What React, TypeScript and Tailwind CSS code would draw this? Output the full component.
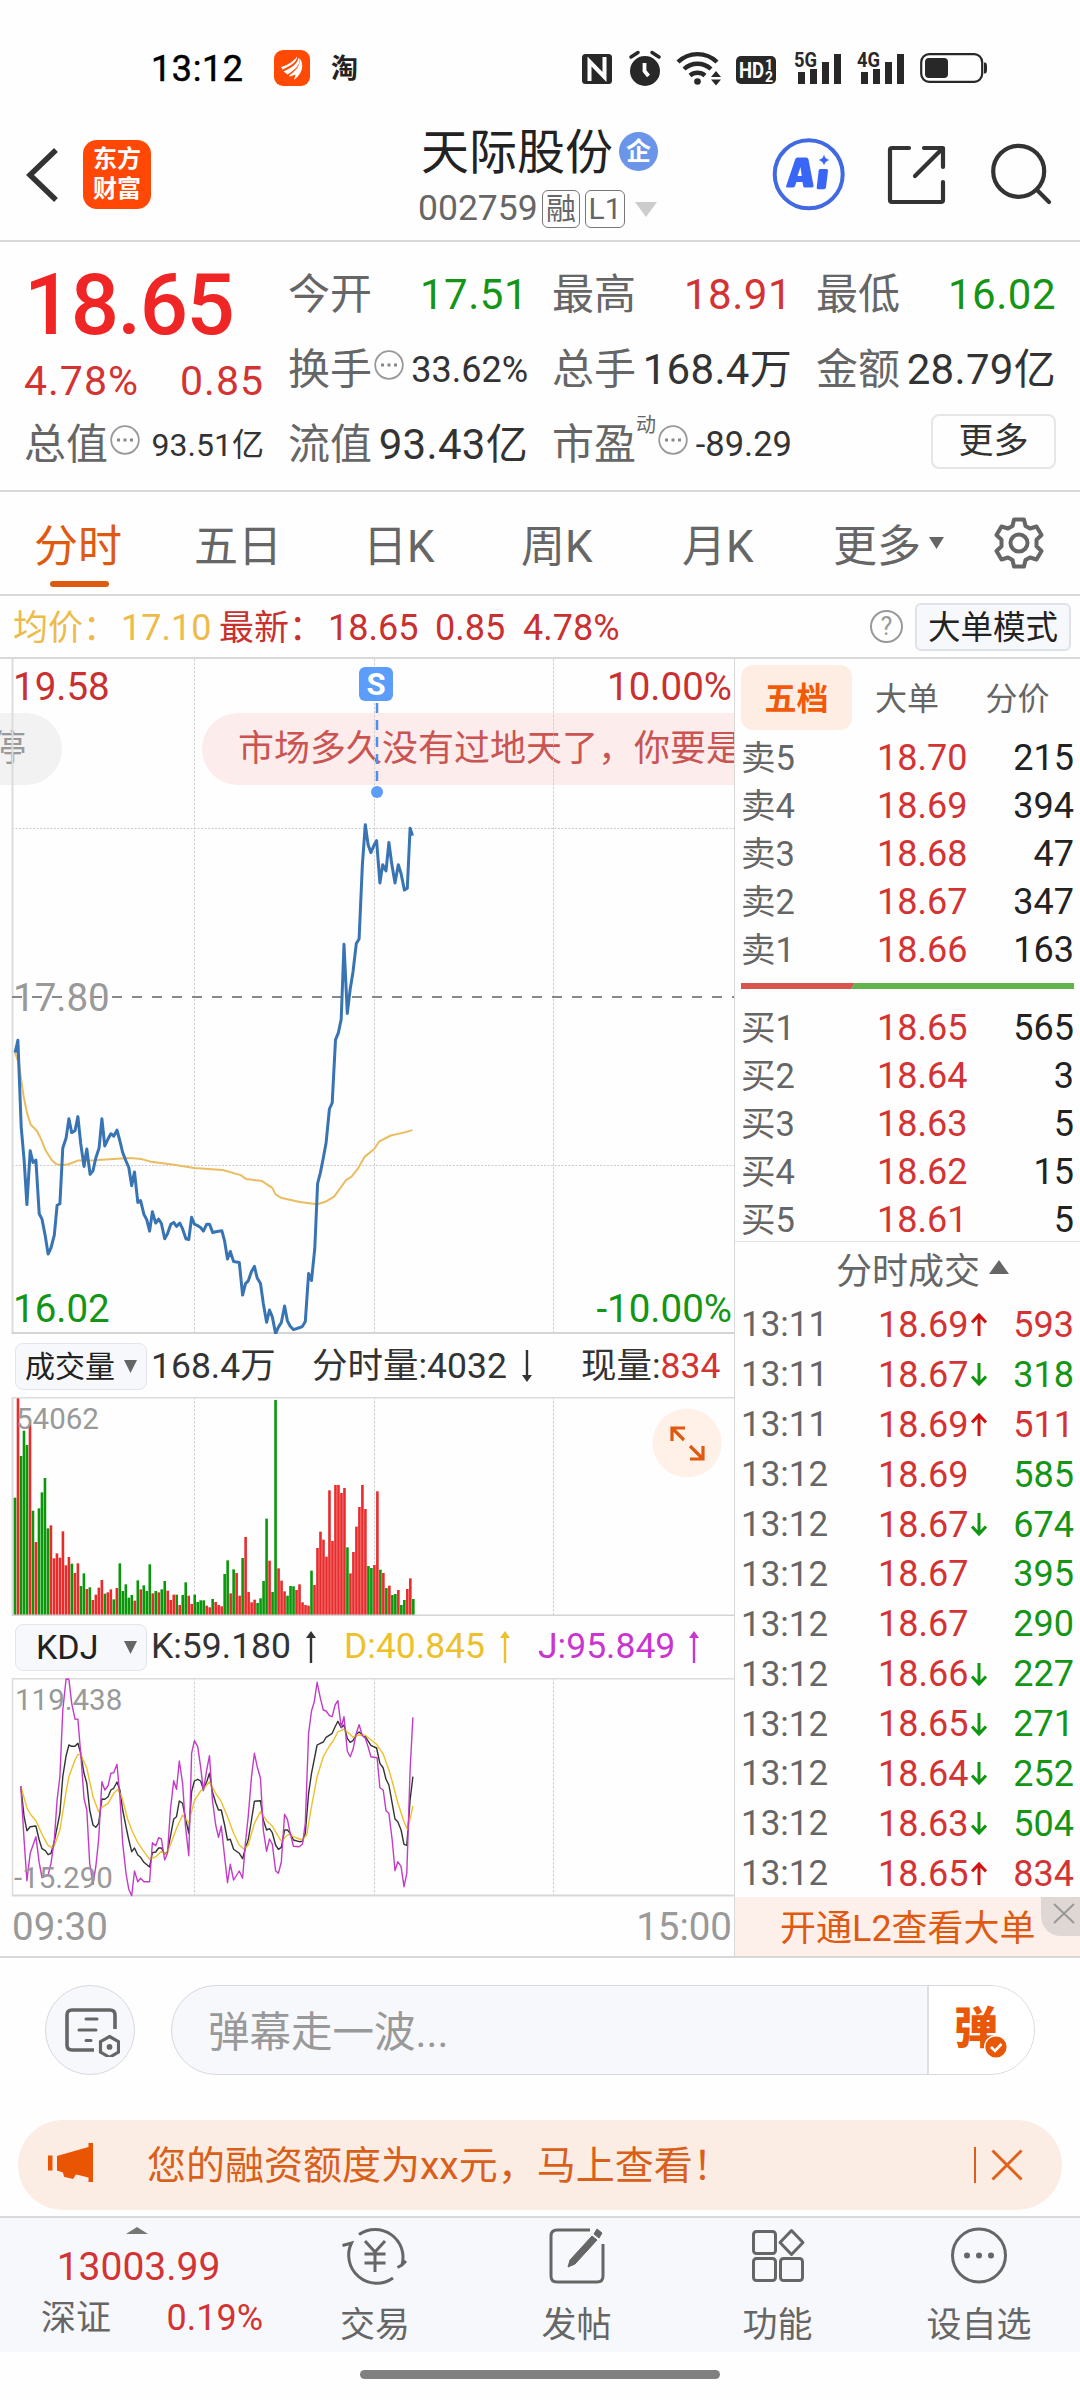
import React from "react";

type Pt = [number, number];

const parse = (s: string): Pt[] =>
  s.trim().split(/\s+/).map((p) => p.split(",").map(Number) as Pt);

const line = (s: string, sy: number) =>
  parse(s)
    .map(([x, y]) => `${(x / 2.119).toFixed(1)},${(y / sy).toFixed(1)}`)
    .join(" ");

const PRICE = line(
  `32,750 38,716 45,955 51,1045 57,1168 64,1020 70,1052 76,1046 83,1193 89,1208 96,1255 102,1304 108,1287 115,1252 121,1170 127,1166 133,1012 140,985 146,932 152,970 159,965 165,926 171,1000 178,1063 184,1015 191,1085 197,1075 203,1040 210,1012 216,932 222,1007 229,987 235,973 241,980 248,963 254,993 260,1025 267,1048 273,1066 279,1116 285,1078 292,1162 298,1157 305,1195 311,1210 317,1241 323,1188 330,1219 336,1208 342,1220 349,1262 355,1248 362,1222 368,1217 374,1228 381,1219 387,1235 394,1262 400,1264 406,1203 412,1222 419,1226 425,1231 431,1241 438,1222 444,1222 451,1245 457,1243 470,1240 476,1268 482,1318 488,1297 495,1325 507,1327 514,1417 520,1386 526,1378 533,1352 539,1338 545,1370 552,1385 558,1440 565,1492 571,1458 577,1477 584,1523 590,1505 596,1493 603,1447 609,1488 615,1503 622,1512 634,1507 641,1503 647,1490 654,1358 660,1377 667,1288 673,1110 679,1080 685,1040 691,998 698,905 704,888 711,715 717,695 723,658 729,452 736,642 742,575 748,528 755,450 761,437 768,232 774,123 780,178 786,200 793,178 798,167 805,283 811,233 818,250 824,172 830,230 837,283 844,233 850,258 857,303 863,298 869,133 874,153`,
  2.751,
);

const AVERAGE = line(
  `32,750 40,780 50,870 57,915 65,948 78,965 87,988 97,1020 110,1046 120,1057 130,1060 145,1057 165,1047 200,1046 240,1043 275,1040 300,1043 320,1050 365,1058 411,1067 472,1073 510,1087 522,1098 555,1103 565,1112 577,1122 584,1140 595,1149 635,1161 672,1167 690,1160 708,1146 720,1125 733,1101 745,1091 758,1070 773,1036 793,1015 803,995 828,978 855,970 874,963`,
  2.751,
);

const J_LINE = line(
  `44,528 51,690 57,812 64,730 76,680 83,758 89,803 102,795 108,760 115,690 121,570 127,500 133,300 140,207 146,208 152,280 159,327 165,328 171,430 178,565 184,600 190,760 197,823 203,770 209,690 216,515 222,540 229,527 235,490 241,488 248,463 254,560 260,700 267,790 273,838 279,857 285,783 292,815 298,805 305,815 317,815 323,698 330,707 336,683 342,687 349,750 355,730 361,600 368,512 374,538 380,453 387,520 393,650 400,737 406,430 412,392 419,410 425,470 431,542 438,480 444,437 450,570 457,645 463,682 469,648 476,740 482,818 488,763 495,810 507,783 514,805 520,700 526,620 533,500 539,430 545,470 552,505 558,660 565,724 571,687 577,702 584,782 590,790 596,757 603,613 609,628 615,670 622,709 634,710 641,702 647,640 654,370 660,303 666,275 672,217 679,265 685,300 691,303 698,317 704,320 710,285 716,272 723,352 729,320 736,423 742,440 748,418 755,370 761,344 768,377 774,385 780,410 786,440 799,443 805,533 812,540 818,602 824,610 831,690 837,782 843,755 850,770 856,830 862,790 869,480 875,322`,
  3,
);

const K_LINE = line(
  `44,528 51,620 57,662 64,650 76,648 83,690 89,716 96,722 102,734 108,730 115,695 127,610 133,500 140,437 146,405 152,409 159,409 165,400 171,430 178,490 184,520 190,600 197,645 203,652 209,640 216,567 222,568 229,560 235,540 241,535 248,516 254,540 260,600 267,650 273,690 279,725 285,714 292,735 298,742 305,757 317,771 323,728 330,726 336,714 342,714 349,733 355,725 361,680 368,627 374,620 380,573 387,580 393,625 400,670 406,545 412,513 419,508 425,513 431,538 438,515 444,490 450,545 457,578 463,600 469,600 476,645 482,690 488,688 495,718 507,730 514,746 520,715 526,690 533,630 539,574 552,572 558,630 565,660 571,656 577,668 584,705 590,718 596,712 603,660 609,660 615,670 622,690 634,695 641,694 647,670 654,550 660,490 672,405 679,400 685,396 691,382 704,370 710,350 716,334 723,353 729,345 736,385 742,397 748,392 755,373 761,366 768,375 774,380 786,406 798,414 805,460 812,474 818,508 824,525 831,580 837,627 843,635 850,660 856,703 862,706 869,570 875,500`,
  3,
);

const D_LINE = line(
  `44,528 57,593 64,612 76,632 89,673 102,706 110,713 115,708 127,660 140,545 146,500 159,450 165,434 171,432 184,475 197,560 209,605 216,592 229,580 241,550 250,538 258,560 270,625 279,660 292,698 305,725 317,748 330,740 342,724 352,734 361,705 374,655 387,615 400,638 406,605 412,572 425,543 431,538 444,515 457,550 469,575 482,620 495,670 507,705 517,718 526,705 539,640 552,605 565,632 577,648 590,680 597,695 605,680 612,673 622,680 634,687 641,689 650,675 660,590 672,500 685,440 698,408 706,393 716,365 723,362 729,357 736,366 748,381 761,375 774,376 786,389 798,403 812,432 824,480 831,514 843,578 856,635 864,660 870,620 875,588`,
  3,
);

// One entry per minute: tick colour (g / r) and top of the bar.
const VOLUME =
  `g503 r205 g378 g302 g345 r283 g542 r636 g535 g487 g444 g595 r586 r685 r670 r683 r604 r706 r681 g701 r729 r700 g768 g730 r777 g772 r810 r794 r773 r750 g791 r787 r778 g808 r774 g700 g783 g763 g803 g795 r812 g751 r778 g766 g783 g703 r790 g783 r787 g778 g753 r782 r810 r794 g794 r825 g795 g757 r797 r822 g794 g816 g811 g811 r827 r832 g807 r816 r825 r829 g732 g691 r790 g718 r729 r797 g684 r621 r786 r817 r809 g819 g805 g753 g566 r692 g786 g210 r715 r752 r784 g797 g768 g769 r780 r763 r817 r825 r827 g722 r765 r654 r605 r629 r680 r481 r633 r465 r465 r489 r474 g652 r730 r666 r590 r531 r465 r537 g708 g714 r705 r484 g719 r729 g774 r767 g795 g792 r780 g825 g810 r777 r745 g807`.split(
    " ",
  );

const SELLS = [
  ["卖5", "18.70", "215"],
  ["卖4", "18.69", "394"],
  ["卖3", "18.68", "47"],
  ["卖2", "18.67", "347"],
  ["卖1", "18.66", "163"],
];
const BUYS = [
  ["买1", "18.65", "565"],
  ["买2", "18.64", "3"],
  ["买3", "18.63", "5"],
  ["买4", "18.62", "15"],
  ["买5", "18.61", "5"],
];
const TRADES: [string, string, string, string, string][] = [
  ["13:11", "18.69", "up", "593", "r"],
  ["13:11", "18.67", "down", "318", "g"],
  ["13:11", "18.69", "up", "511", "r"],
  ["13:12", "18.69", "", "585", "g"],
  ["13:12", "18.67", "down", "674", "g"],
  ["13:12", "18.67", "", "395", "g"],
  ["13:12", "18.67", "", "290", "g"],
  ["13:12", "18.66", "down", "227", "g"],
  ["13:12", "18.65", "down", "271", "g"],
  ["13:12", "18.64", "down", "252", "g"],
  ["13:12", "18.63", "down", "504", "g"],
  ["13:12", "18.65", "up", "834", "r"],
];

function StatusBar() {
  return (
    <div className="flex h-[136px] items-center pl-[151px]">
      <span className="w-[123px] pt-[2px] text-[36px] tracking-[0.6px] text-black [-webkit-text-stroke:0.5px_black]">13:12</span>
      <svg className="h-9 w-9" viewBox="0 0 36 36">
        <rect width="36" height="36" rx="9" fill="#ff4a05" />
        <path d="M7 17C14 15 20 11 23 6.500c1 4-6 9.500-14.500 13Z M9.500 21.500C18 18 24 13 24.500 7.500 28 14 21 20 13.500 24.500Z M15 25.500C22 21 27 15 25.500 8 31 15 28 24 20 30l1.500-5.500-5.500 2Z" fill="#fff" />
      </svg>
      <span className="ml-[21px] w-[229px] pt-[2px] text-[27px] font-bold text-[#222]">淘</span>
      <svg className="h-[64px] w-[420px]" viewBox="560 36 420 64" overflow="visible" fill="#282828">
        <rect x="582" y="54" width="30" height="30" rx="3.500" />
        <path d="M589.500 81V61.500l15 15.500V57" fill="none" stroke="#fff" strokeWidth="4" />
        <g transform="translate(-22 0)">
          <circle cx="667" cy="71" r="15" />
          <path d="m653 57 7-4.500M681 57l-7-4.500" stroke="#282828" strokeWidth="3.500" fill="none" strokeLinecap="round" />
          <path d="M666.500 63v8l4 5" stroke="#fff" strokeWidth="3.800" fill="none" />
          <g fill="none" stroke="#282828" strokeWidth="4.400">
            <path d="M700 62a28 28 0 0 1 39 0" />
            <path d="M706 69a20 20 0 0 1 27 0" />
            <path d="M712 75.500a11.500 11.500 0 0 1 15 0" />
          </g>
          <circle cx="719.500" cy="81.500" r="3.300" />
          <path d="M733 77l5-6 5 6ZM733 79.500l5 6 5-6Z" />
          <rect x="758" y="56" width="40" height="28" rx="5" />
        </g>
        <text x="739" y="78" fill="#fff" fontSize="22.500" fontWeight="700" textLength="25" lengthAdjust="spacingAndGlyphs">HD</text>
        <text x="765" y="70" fill="#fff" fontSize="14" fontWeight="700">1</text>
        <text x="765" y="82" fill="#fff" fontSize="14" fontWeight="700">2</text>
        <text x="794" y="67" fontSize="20" fontWeight="700" textLength="23" lengthAdjust="spacingAndGlyphs">5G</text>
        <path d="M798 72h7v12h-7zM810 69h7v15h-7zM822 62h7v22h-7zM834 54h7v30h-7z" />
        <text x="857" y="67" fontSize="20" fontWeight="700" textLength="23" lengthAdjust="spacingAndGlyphs">4G</text>
        <path d="M861 72h7v12h-7zM873 69h7v15h-7zM885 62h7v22h-7zM897 54h7v30h-7z" />
        <rect x="921.200" y="54.200" width="61" height="27.600" rx="8" fill="none" stroke="#282828" strokeWidth="2.200" />
        <rect x="925" y="58" width="23" height="20" rx="4" />
        <path d="M984 62.500c2.600 0 3 1 3 5.500s-.4 5.500-3 5.500Z" />
      </svg>
    </div>
  );
}

function Header() {
  return (
    <div className="flex h-[106px] border-b-2 border-[#d8d8d8]">
      <svg className="mt-3 ml-[25px] h-[54px] w-[34px]" viewBox="0 0 34 54">
        <path d="M31 2 5 27l26 25" fill="none" stroke="#333" strokeWidth="5.500" />
      </svg>
      <div className="mt-1 ml-6 flex h-[69px] w-[68px] flex-col items-center justify-center gap-[3px] rounded-[14px] bg-[#ff4706] text-[24px] leading-[27px] font-bold text-white">
        <span>东方</span>
        <span>财富</span>
      </div>
      <div className="-mt-[6px] ml-[267px] w-[342px]">
        <div className="flex h-[46px] items-center pl-[3px]">
          <span className="w-[198px] text-[48px] whitespace-nowrap text-[#222]">天际股份</span>
          <span className="-mt-[3px] flex h-[39px] w-[39px] items-center justify-center rounded-full bg-[#6a95e8] text-[25px] font-bold text-white">企</span>
        </div>
        <div className="mt-[14px] flex h-[38px] items-center text-[35.500px] text-[#666]">
          <span className="w-[124px]">002759</span>
          <span className="flex h-[38px] w-[38px] items-center justify-center rounded-md border-[1.500px] border-[#777] text-[30px]">融</span>
          <span className="ml-[5px] flex h-[38px] w-[40px] items-center justify-center rounded-md border-[1.500px] border-[#777] text-[30px]">L1</span>
          <svg className="ml-[10px] h-[15px] w-[22px]" viewBox="0 0 22 15"><path d="M0 0h22L11 15Z" fill="#ccc" /></svg>
        </div>
      </div>
      <svg className="mt-[1px] h-[74px] w-[290px]" viewBox="760 137 290 74" overflow="visible" fill="none">
        <circle cx="808.700" cy="174.300" r="34" stroke="#4169e1" strokeWidth="4" />
        <path
          d="M797.500 157.500h8.500q2 0 2.500 2l5 26q.3 2-1.500 2h-7q-1.500 0-1.800-1.500l-.7-4h-6l-1.500 4q-.6 1.500-2.200 1.500h-5.300q-2 0-1.200-2l9-26.500q.6-1.500 2.200-1.500Z"
          fill="#3a66f8"
        />
        <path d="m800.500 167-3 9h4.200Z" fill="#fff" />
        <path d="M820 169h6.500q1.700 0 1.500 1.700l-2 16.500q-.3 2-2 2H818q-1.500 0-1.300-1.700l2-17q.2-1.500 1.300-1.500Z" fill="#3a66f8" />
        <path d="M824 154.500q1 4.500 5.500 5.500-4.500 1-5.500 5.500-1-4.500-5.500-5.500 4.500-1 5.500-5.500Z" fill="#3a66f8" />
        <g stroke="#333" strokeWidth="4.200" strokeLinecap="round" strokeLinejoin="round">
          <path d="M909 148h-17q-2 0-2 2v50q0 2 2 2h49q2 0 2-2v-18M924 148h19v19M942 149l-27 27" />
          <circle cx="1018.700" cy="171.300" r="25.500" />
          <path d="m1037 190 12 12" />
        </g>
      </svg>
    </div>
  );
}

function Dots({ className = "" }: { className?: string }) {
  return (
    <svg className={"h-[30px] w-[30px] shrink-0 -translate-y-[5px] " + className} viewBox="0 0 30 30">
      <circle cx="15" cy="15" r="13.800" fill="none" stroke="#999" strokeWidth="1.800" />
      <path d="M7 13.500h3v3H7zM13.500 13.500h3v3h-3zM20 13.500h3v3h-3z" fill="#888" />
    </svg>
  );
}

function Cell({ label, value, cls, extra }: { label: string; value: string; cls: string; extra?: React.ReactNode }) {
  return (
    <div className="flex items-center justify-between whitespace-nowrap">
      <span className="flex items-center text-[42px] text-[#666]">
        {label}
        {extra}
      </span>
      <span className={cls}>{value}</span>
    </div>
  );
}

function Quote() {
  return (
    <div className="grid h-[250px] grid-cols-4 grid-rows-[75px_75px_75px] gap-x-6 border-b-2 border-[#d8d8d8] px-6 pt-[15px]">
      <div className="flex items-center pt-[22px] text-[85px] font-medium tracking-[-1.500px] text-[#f02525]">18.65</div>
      <Cell label="今开" value="17.51" cls="text-[42px] tracking-[0.5px] text-[#159515]" />
      <Cell label="最高" value="18.91" cls="text-[42px] tracking-[0.5px] text-[#d43333]" />
      <Cell label="最低" value="16.02" cls="text-[42px] tracking-[0.5px] text-[#159515]" />
      <div className="flex items-center justify-between pt-6 text-[41px] tracking-[1px] text-[#d43333]">
        <span>4.78%</span>
        <span>0.85</span>
      </div>
      <Cell label="换手" value="33.62%" cls="text-[36px] text-[#333]" extra={<Dots className="ml-[2px]" />} />
      <Cell label="总手" value="168.4万" cls="text-[42px] tracking-[0.3px] text-[#333]" />
      <Cell label="金额" value="28.79亿" cls="text-[42px] tracking-[0.3px] text-[#333]" />
      <Cell label="总值" value="93.51亿" cls="text-[32px] text-[#333]" extra={<Dots className="ml-[2px]" />} />
      <Cell label="流值" value="93.43亿" cls="text-[42px] tracking-[0.3px] text-[#333]" />
      <Cell
        label="市盈"
        value="-89.29"
        cls="text-[34.500px] text-[#333]"
        extra={
          <>
            <span className="-mt-[40px] w-5 text-[20px]">动</span>
            <Dots className="ml-[2px]" />
          </>
        }
      />
      <div className="flex items-center justify-end">
        <span className="-mt-[6px] flex h-[55px] w-[125px] items-center justify-center rounded-lg border-2 border-[#e6e6e6] text-[35px] text-[#333]">更多</span>
      </div>
    </div>
  );
}

function Tabs() {
  return (
    <div className="flex h-[104px] items-center border-b-2 border-[#d8d8d8] pl-[34px] text-[44px] whitespace-nowrap text-[#666]">
      <div className="relative w-[88px] pt-[7px] text-[#df5a10]">
        分时
        <div className="absolute top-[63px] left-[16px] h-[6px] w-[59px] rounded-full bg-[#df5a10]" />
      </div>
      <span className="ml-[72px] w-[88px] pt-[7px]">五日</span>
      <span className="ml-[81px] w-[72px] pt-[7px]">日K</span>
      <span className="ml-[86px] w-[72px] pt-[7px]">周K</span>
      <span className="ml-[89px] w-[72px] pt-[7px]">月K</span>
      <span className="ml-[79px] w-[96px] pt-[7px]">更多</span>
      <svg className="h-3 w-[15px]" viewBox="0 0 15 12"><path d="M0 0h15L7.500 12Z" fill="#666" /></svg>
      <svg className="ml-[49px] h-[52px] w-[52px]" viewBox="0 0 52 52" fill="none" stroke="#666" strokeWidth="4" strokeLinejoin="round">
        <path d="M21 2.500h10l1.500 6.500 4.500 2.500 6.500-2 5 8.500-5 4.800v6.400l5 4.800-5 8.500-6.500-2-4.500 2.500-1.500 6.500H21l-1.500-6.500-4.500-2.500-6.500 2-5-8.500 5-4.800v-6.400l-5-4.800 5-8.500 6.500 2 4.500-2.500Z" />
        <circle cx="26" cy="26" r="8.500" />
      </svg>
    </div>
  );
}

function InfoBar() {
  return (
    <div className="flex h-[63px] items-center border-b-2 border-[#d8d8d8] pl-[13px] text-[36px] whitespace-nowrap">
      <span className="w-[108px] pt-[4px] text-[35px] text-[#edbb4c]">均价：</span>
      <span className="w-[98px] pt-[3px] text-[#edbb4c]">17.10</span>
      <span className="w-[109px] pt-[4px] text-[35px] text-[#c93030]">最新：</span>
      <span className="w-[107px] pt-[3px] text-[#c93030]">18.65</span>
      <span className="w-[88px] pt-[3px] text-[#c93030]">0.85</span>
      <span className="pt-[3px] text-[#c93030]">4.78%</span>
      <span className="ml-auto flex h-[33px] w-[33px] items-center justify-center rounded-full border-2 border-[#999] text-[25px] text-[#999]">?</span>
      <span className="mr-[9px] ml-3 flex h-[48px] w-[156px] items-center justify-center rounded-md border-2 border-[#dfe2e8] bg-[#f7f8fb] pt-[4px] text-[32.500px] text-[#222]">大单模式</span>
    </div>
  );
}

function VGrid({ h }: { h: number }) {
  return (
    <path d={`M194.500 0V${h}M374.500 0V${h}M553.500 0V${h}`} stroke="#d0d0d0" strokeWidth="1" strokeDasharray="2.500 1.500" />
  );
}

function PriceChart() {
  return (
    <div className="relative h-[675px] overflow-hidden text-[38.500px]">
      <div className="absolute top-[54px] -left-[60px] flex h-[72px] w-[122px] items-center justify-end rounded-full bg-[#f2f2f2] pr-[36px] text-[36px] text-[#999]">停</div>
      <div className="absolute top-[54px] left-[202px] flex h-[72px] w-[700px] items-center rounded-full bg-[#fdecec] pl-[36px] text-[36px] whitespace-nowrap text-[#ca5452]">
        市场多久没有过地天了，你要是
      </div>
      <svg className="absolute top-0 left-0 h-[675px] w-[734px]" viewBox="0 659 734 675" fill="none">
        <g transform="translate(0 659)"><VGrid h={675} /></g>
        <path d="M12 828.500H734M12 1165.500H734" stroke="#ccc" strokeDasharray="2 1.500" />
        <path d="M12.500 658V1334" stroke="#dcdcdc" strokeWidth="2" />
        <path d="M12 1333H734" stroke="#d4d4d4" strokeWidth="2" />
        <path d="M12 997H734" stroke="#888" strokeWidth="2" strokeDasharray="10 10" />
        <g transform="translate(0 780)" strokeLinejoin="round">
          <polyline points={AVERAGE} stroke="#e9bd60" strokeWidth="2" />
          <polyline points={PRICE} stroke="#3874b4" strokeWidth="3" />
        </g>
        <path d="M377 703v90" stroke="#4f90ec" strokeWidth="2.500" strokeDasharray="10 7" />
        <circle cx="377" cy="792" r="6" fill="#5c9dfa" />
      </svg>
      <span className="absolute top-[9px] left-[13px] text-[#c93030]">19.58</span>
      <span className="absolute top-[9px] right-[2px] text-[#c93030]">10.00%</span>
      <span className="absolute top-[320px] left-[13px] text-[#999]">17.80</span>
      <span className="absolute top-[631px] left-[13px] text-[#159515]">16.02</span>
      <span className="absolute top-[631px] right-[2px] text-[#159515]">-10.00%</span>
      <span className="absolute top-[8px] left-[359px] flex h-[34px] w-[34px] items-center justify-center rounded-md bg-[#5c9dfa] text-[31px] font-bold text-white">S</span>
    </div>
  );
}

function Arrow({ className, down }: { className: string; down?: boolean }) {
  return (
    <svg className={"h-[32px] w-[12px] shrink-0 " + className} viewBox="0 0 12 32">
      <path d={down ? "M4.800 0h2.400v25h3.800l-5 7-5-7h3.800Z" : "M4.800 32h2.400V7h3.800L6 0 1 7h3.800Z"} fill="currentColor" />
    </svg>
  );
}

function Selector({ children, className }: { children: string; className: string }) {
  return (
    <div className="mr-[4px] flex h-[47px] w-[132px] shrink-0 items-center justify-between rounded-lg border-[1.500px] border-[#e3e5ec] bg-[#f7f8fb] pr-[9px]">
      <span className={className}>{children}</span>
      <svg className="h-[13px] w-[13px]" viewBox="0 0 13 13"><path d="M0 0h13L6.500 13Z" fill="#666" /></svg>
    </div>
  );
}

function LeftColumn() {
  return (
    <div className="w-[735px] border-r-[1.500px] border-[#d8d8d8]">
      <PriceChart />
      <div className="flex h-[63px] items-center pt-[1px] pl-[15px] text-[35.500px] whitespace-nowrap text-[#333]">
        <Selector className="pt-[2px] pl-[9px] text-[30px] text-[#222]">成交量</Selector>
        <span className="w-[161px] pt-[1px]">168.4万</span>
        <span className="w-[209px] pt-[1px]">分时量:4032</span>
        <Arrow down className="" />
        <span className="ml-[48px] pt-[1px]">现量:<span className="text-[#d43333]">834</span></span>
      </div>
      <div className="relative h-[219px]">
        <svg className="absolute top-0 left-0 h-[219px] w-[734px]" viewBox="0 1397 734 219" fill="none">
          <g transform="translate(0 1397)"><VGrid h={219} /></g>
          <path d="M12 1397.800H734" stroke="#dcdcdc" strokeWidth="1.500" />
          <path d="M12.500 1397V1616" stroke="#dcdcdc" strokeWidth="2" />
          {VOLUME.map((v, i) => {
            const h = (855 - Number(v.slice(1))) / 3;
            return (
              <rect key={i} x={13.700 + 2.995 * i} y={1615 - h} width="2.600" height={h} fill={v[0] === "g" ? "#0a970a" : "#e92b2b"} />
            );
          })}
          <path d="M12 1615.200H734" stroke="#d4d4d4" strokeWidth="1.500" />
        </svg>
        <span className="absolute top-[8px] left-4 text-[29.500px] text-[#999]">54062</span>
        <svg className="absolute top-[11px] left-[652px] h-[70px] w-[70px]" viewBox="0 0 70 70">
          <circle cx="35" cy="35" r="34.500" fill="#fff0e8" />
          <path d="M20 33V20h13M20.500 20.500 32 32M38 51h13V38M50.500 50.500 38 38" fill="none" stroke="#df5a10" strokeWidth="3.200" />
        </svg>
      </div>
      <div className="flex h-[62px] items-center pl-[15px] text-[35.500px] whitespace-nowrap text-[#333]">
        <Selector className="pl-[20px] text-[34px] text-[#222]">KDJ</Selector>
        <span className="w-[154px]">K:59.180</span>
        <Arrow className="" />
        <span className="ml-[27px] w-[155px] text-[#ecc12c]">D:40.845</span>
        <Arrow className="text-[#ecc12c]" />
        <span className="ml-[27px] w-[150px] text-[#c936cf]">J:95.849</span>
        <Arrow className="text-[#c936cf]" />
      </div>
      <div className="relative h-[218px] text-[29.500px] text-[#999]">
        <svg className="absolute top-0 left-0 h-[219px] w-[734px]" viewBox="0 1678 734 219" fill="none">
          <g transform="translate(0 1678)"><VGrid h={218} /></g>
          <path d="M12 1678.800H734M12.500 1678V1896" stroke="#dcdcdc" strokeWidth="1.500" />
          <path d="M12 1895.500H734" stroke="#d8d8d8" strokeWidth="2" />
          <g transform="translate(0 1610)" strokeLinejoin="round" strokeWidth="1.400">
            <polyline points={K_LINE} stroke="#333" />
            <polyline points={D_LINE} stroke="#ecc12c" />
            <polyline points={J_LINE} stroke="#c23cc8" />
          </g>
        </svg>
        <span className="absolute top-[8px] left-[15px]">119.438</span>
        <span className="absolute top-[186px] left-[14px]">-15.290</span>
      </div>
      <div className="flex h-[60px] items-center justify-between pt-[3px] pr-[2px] pl-[12px] text-[38.500px] text-[#999]">
        <span>09:30</span>
        <span>15:00</span>
      </div>
    </div>
  );
}

function BookRow({ row }: { row: string[] }) {
  return (
    <div className="flex h-[48px] items-center text-[36px]">
      <span className="w-[136px] text-[34.500px] text-[#666]">{row[0]}</span>
      <span className="text-[#d43333]">{row[1]}</span>
      <span className="ml-auto text-[#222]">{row[2]}</span>
    </div>
  );
}

function RightColumn() {
  return (
    <div className="flex flex-1 flex-col">
      <div className="mt-[6px] flex h-[65px] pl-[6px] text-[32px] text-[#666]">
        <span className="flex w-[111px] items-center justify-center rounded-xl bg-[#feede3] pt-[2px] font-bold text-[#f25a0a]">五档</span>
        <span className="flex w-[110px] items-center justify-center pt-[2px]">大单</span>
        <span className="flex w-[111px] items-center justify-center pt-[2px]">分价</span>
      </div>
      <div className="mt-[4px] pr-[6px] pl-[6px]">
        {SELLS.map((r) => <BookRow key={r[0]} row={r} />)}
      </div>
      <svg className="mt-[9px] ml-[6px] h-[6px] w-[333px]" viewBox="0 0 333 6">
        <path d="M0 0h114l-4 6H0Z" fill="#d9534f" />
        <path d="M114 0h219v6H110Z" fill="#62b34c" />
      </svg>
      <div className="mt-[15px] pr-[6px] pl-[6px]">
        {BUYS.map((r) => <BookRow key={r[0]} row={r} />)}
      </div>
      <div className="-mt-[3px] flex h-[59px] items-center border-t-[1.500px] border-[#e2e2e2] pl-[101px] text-[36px] text-[#666]">
        <span className="w-[153px] pt-[1px]">分时成交</span>
        <svg className="-mt-2 h-[14px] w-5" viewBox="0 0 20 14"><path d="M0 14h20L10 0Z" fill="#666" /></svg>
      </div>
      <div className="pr-[6px] pl-[6px] text-[36px]">
        {TRADES.map(([t, p, d, q, c], i) => (
          <div key={i} className="flex h-[49.900px] items-center">
            <span className="w-[137px] text-[35px] text-[#666]">{t}</span>
            <span className="w-[93px] text-[#d43333]">{p}</span>
            {d && (
              <svg className={d === "up" ? "h-[23px] w-[16px] text-[#d01414]" : "h-[23px] w-[16px] rotate-180 text-[#0f960f]"} viewBox="0 0 16 23" fill="none" stroke="currentColor" strokeWidth="3">
                <path d="M8 23V2M1 9.500 8 2l7 7.500" />
              </svg>
            )}
            <span className={c === "r" ? "ml-auto text-[#d43333]" : "ml-auto text-[#159515]"}>{q}</span>
          </div>
        ))}
      </div>
      <div className="relative -mt-[2px] flex flex-1 items-center bg-[#fdf0ea] pt-[6px] pl-[45px] text-[36px] text-[#df5a10]">
        开通L2查看大单
        <span className="absolute top-0 right-0 flex h-[39px] w-[39px] items-center justify-center rounded-bl-[20px] bg-[#dfd7d3]">
          <svg className="mt-[-6px] ml-[7px] h-[21px] w-[22px]" viewBox="0 0 22 21"><path d="m1 1 20 19M21 1 1 20" stroke="#999" strokeWidth="2" /></svg>
        </span>
      </div>
    </div>
  );
}

function InputRow() {
  return (
    <div className="flex h-[146px] items-center border-t-2 border-[#d8d8d8] pl-[45px]">
      <div className="flex h-[90px] w-[90px] items-center justify-center rounded-full border-[1.500px] border-[#d6d9de] bg-[#f7f8fb]">
        <svg className="mt-1 ml-1 h-[50px] w-[56px]" viewBox="0 0 56 50" fill="none" stroke="#666" strokeWidth="3.600" strokeLinecap="round">
          <path d="M51 22V8q0-5-5-5H8Q3 3 3 8v30q0 5 5 5h22" strokeLinecap="butt" />
          <path d="M22 12h11M15 23h17M22 33.500h5" strokeWidth="3" />
          <path d="m45.500 29.500 9 5.200v10.400l-9 5.200-9-5.200V34.700Z" strokeWidth="3.200" />
          <circle cx="45.500" cy="39.900" r="2.900" fill="#666" stroke="none" />
        </svg>
      </div>
      <div className="ml-[36px] flex h-[90px] w-[864px] overflow-hidden rounded-full border-[1.500px] border-[#d6d9de] bg-[#f7f8fb]">
        <span className="flex w-[757px] items-center border-r-2 border-[#dcdfe3] pt-[5px] pl-[36px] text-[41.500px] text-[#999]">弹幕走一波...</span>
        <span className="relative flex-1 bg-white pt-[21px] pl-[25px] text-[44px] font-black text-[#e85806]">
          弹
          <svg className="absolute top-[49px] left-[55px] h-6 w-6" viewBox="0 0 24 24">
            <circle cx="12" cy="12" r="11.300" fill="#e85806" stroke="#fff" strokeWidth="1.400" />
            <path d="m7 12 4 4 6.500-7" stroke="#fff" strokeWidth="2.600" fill="none" />
          </svg>
        </span>
      </div>
    </div>
  );
}

function Banner() {
  return (
    <div className="mx-[18px] mt-[18px] flex h-[90px] items-center rounded-full bg-[#fcede4] pl-[30px] text-[39px] whitespace-nowrap text-[#d9601a]">
      <svg className="-mt-1 h-[40px] w-[46px]" viewBox="0 0 46 40" fill="#ea5504">
        <path d="M0 12.500h4.500v15H0zM9 13 40.500 4V0H45v39h-4.500v-4.500L28 31.500l-3 4.500-9-2.200-1-4.300-6-2Z" />
      </svg>
      <span className="ml-[53px] w-[827px] pt-[2px]">您的融资额度为xx元，马上查看！</span>
      <span className="h-9 w-[2px] bg-[#d9601a]" />
      <svg className="ml-[15px] h-[32px] w-[32px]" viewBox="0 0 32 32"><path d="m1.500 1.500 29 29M30.500 1.500l-29 29" stroke="#e0611c" strokeWidth="3" /></svg>
    </div>
  );
}

function NavItem({ label, className, children }: { label: string; className: string; children: React.ReactNode }) {
  return (
    <div className={"flex flex-col items-center " + className}>
      <svg className="mt-[6px] h-[64px] w-[68px]" viewBox="0 0 68 64" fill="none" stroke="#666" strokeWidth="3">
        {children}
      </svg>
      <span className="mt-[20px] text-[35px] text-[#666]">{label}</span>
    </div>
  );
}

function BottomNav() {
  return (
    <div className="mt-[6px] flex h-[136px] border-t-2 border-[#d6d9de] bg-[#f7f8fb]">
      <div className="flex w-[274px] flex-col items-center pt-[9px]">
        <svg className="h-[7px] w-[22px]" viewBox="0 0 22 7"><path d="M0 7h22L11 0Z" fill="#777" /></svg>
        <span className="mt-[14px] pl-[3px] text-[39px] text-[#d43333]">13003.99</span>
        <div className="mt-[12px] ml-[30px] flex w-[222px] items-center justify-between">
          <span className="pt-[2px] text-[35px] text-[#666]">深证</span>
          <span className="text-[36px] text-[#d43333]">0.19%</span>
        </div>
      </div>
      <NavItem label="交易" className="w-[202px]">
        <path d="M18 10.500A28 28 0 0 1 61 41l-4.500 2.500M61 41l4-4" />
        <path d="M52 55A28 28 0 0 1 10.500 20l-9 2.500" transform="translate(0 -1)" />
        <path d="m24 17 10 11 10-11M34 28v20M23.500 30h21M23.500 39h21" />
      </NavItem>
      <NavItem label="发帖" className="w-[201px]">
        <path d="M47 6H14q-6 0-6 6v40q0 6 6 6h40q6 0 6-6V20" />
        <path d="m54 5 5 4-3 5-5-4ZM49 12l5 4-22 24-7 3 2-7Z" fill="#666" strokeWidth="1" />
      </NavItem>
      <NavItem label="功能" className="w-[201px]">
        <rect x="9.500" y="7.500" width="22" height="22" rx="3" />
        <rect x="9.500" y="34.500" width="22" height="22" rx="3" />
        <rect x="36.500" y="34.500" width="22" height="22" rx="3" />
        <path d="M47.500 6.500 59 18.500l-11.500 12-11.500-12Z" strokeLinejoin="round" />
      </NavItem>
      <NavItem label="设自选" className="w-[202px]">
        <circle cx="34" cy="31.500" r="26.500" />
        <g fill="#666" stroke="none">
          <circle cx="22" cy="31.500" r="3" />
          <circle cx="34" cy="31.500" r="3" />
          <circle cx="46" cy="31.500" r="3" />
        </g>
      </NavItem>
    </div>
  );
}

export default function App() {
  return (
    <div className="h-[2400px] w-[1080px] overflow-hidden bg-[#fefefe] font-['Roboto','Noto_Sans_CJK_SC',sans-serif] leading-none">
      <StatusBar />
      <Header />
      <Quote />
      <Tabs />
      <InfoBar />
      <div className="flex h-[1297px]">
        <LeftColumn />
        <RightColumn />
      </div>
      <InputRow />
      <Banner />
      <BottomNav />
      <div className="mx-auto mt-[18px] h-[9px] w-[360px] rounded-full bg-[#808080]" />
    </div>
  );
}
